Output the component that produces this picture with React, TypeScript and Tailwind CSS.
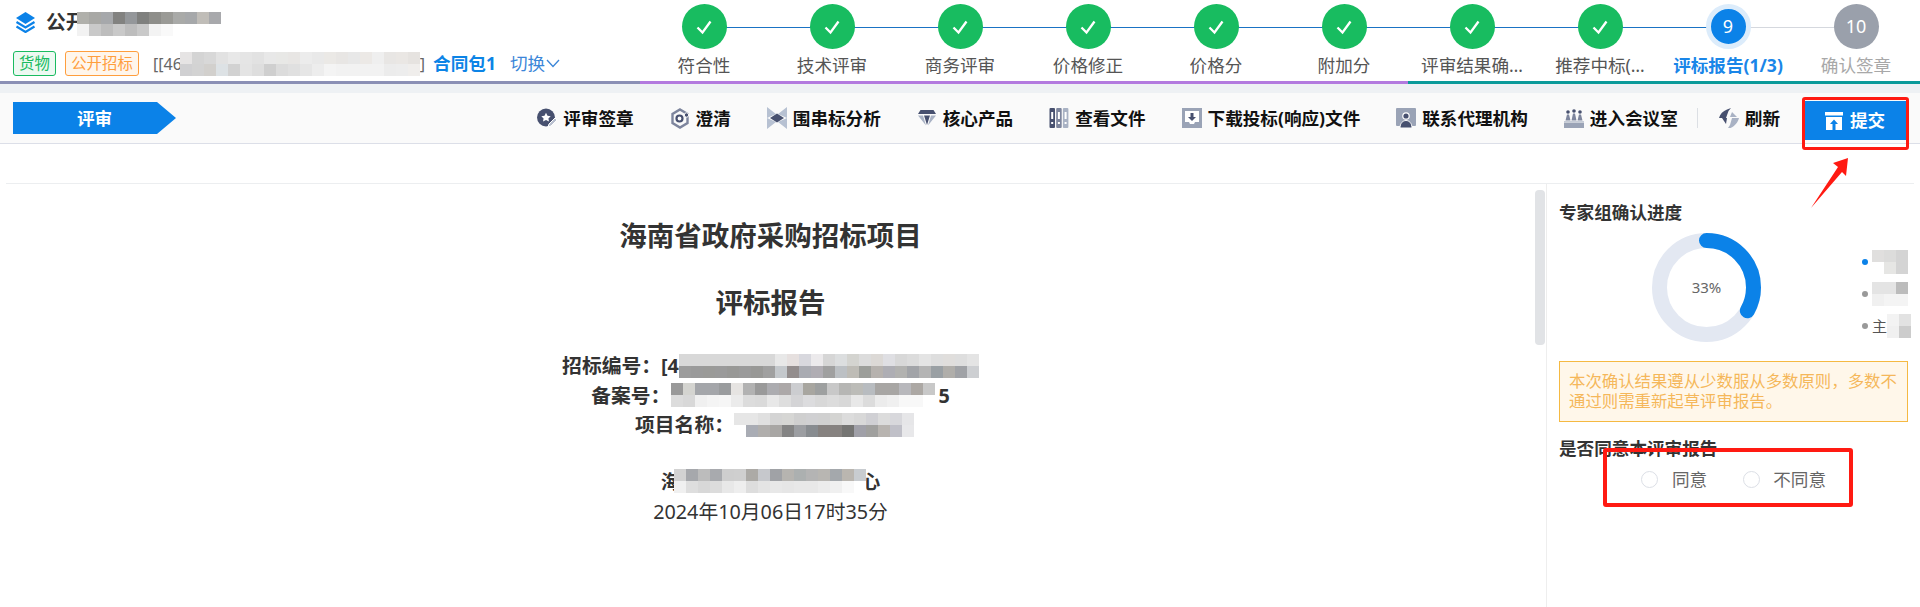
import React from "react";

const B = "#0b82e8";

function Mosaic({ rows, cell = 12, className = "" }: { rows: string[][]; cell?: number; className?: string }) {
  return (
    <span className={"relative inline-flex flex-col align-middle shrink-0 " + className}>
      {rows.map((r, i) => (
        <span key={i} className="flex">
          {r.map((c, j) => (
            <span key={j} className="block" style={{ width: cell, height: cell, backgroundColor: c }} />
          ))}
        </span>
      ))}
    </span>
  );
}

const Logo = () => (
  <svg width="21" height="21" viewBox="0 0 21 21" className="shrink-0">
    <path d="M10.5 0 20 6l-9.5 6L1 6z" fill={B} />
    <path d="M1.5 10 10.5 15.5 19.5 10" fill="none" stroke={B} strokeWidth="2.2" />
    <path d="M1.5 14.5 10.5 20 19.5 14.5" fill="none" stroke={B} strokeWidth="2.2" />
  </svg>
);

const icons: Record<string, React.ReactNode> = {
  sign: (
    <svg width="20" height="20" viewBox="0 0 20 20">
      <circle cx="9" cy="9.5" r="9" fill="#47506f" />
      <path d="m9 4.8 1.5 3 3.2.4-2.3 2.2.6 3.2L9 12.1l-3 1.5.6-3.2-2.3-2.2 3.2-.4z" fill="#fff" />
      <path d="M11 19l1-3 6-6 2 2-6 6z" fill="#b9c0cf" stroke="#fff" strokeWidth="1" />
    </svg>
  ),
  clarify: (
    <svg width="20" height="21" viewBox="0 0 20 21">
      <path d="M10 1.5 17.5 6v9L10 19.5 2.5 15V6z" fill="none" stroke="#7d859d" strokeWidth="2.4" />
      <circle cx="9.5" cy="10.5" r="3" fill="none" stroke="#47506f" strokeWidth="2.2" />
      <circle cx="16.5" cy="7" r="2.2" fill="#47506f" stroke="#fafafa" strokeWidth="1" />
    </svg>
  ),
  bow: (
    <svg width="20" height="22" viewBox="0 0 20 22">
      <path d="M0 0 9 7 0 11zM20 0l-9 7 9 4zM0 22l9-7-9-4zM20 22l-9-7 9-4z" fill="#b7c1d2" />
      <path d="M10 6.5 17 11l-7 4.500L3 11z" fill="#47506f" />
    </svg>
  ),
  gem: (
    <svg width="20" height="18" viewBox="0 0 20 18">
      <path d="M3.500 1h13l2.500 4H1z" fill="#47506f" />
      <path d="M1 6.500h5l3 10zM19 6.500h-5l-3 10z" fill="#a9b2c4" />
      <path d="M7 6.500h6L10 16z" fill="#47506f" />
    </svg>
  ),
  files: (
    <svg width="20" height="20" viewBox="0 0 19 20">
      <rect x="0" y="0" width="5.500" height="20" rx="1" fill="#47506f" />
      <rect x="6.700" y="0" width="5.500" height="20" rx="1" fill="#7d859d" />
      <rect x="13.400" y="0" width="5.500" height="20" rx="1" fill="#a9b2c4" />
      <rect x="1.700" y="4" width="2" height="7" fill="#fff" />
      <rect x="8.400" y="4" width="2" height="7" fill="#fff" />
      <rect x="15.100" y="4" width="2" height="7" fill="#fff" />
      <rect x="1.700" y="14" width="2" height="2" fill="#fff" />
      <rect x="8.400" y="14" width="2" height="2" fill="#fff" />
      <rect x="15.100" y="14" width="2" height="2" fill="#fff" />
    </svg>
  ),
  down: (
    <svg width="20" height="20" viewBox="0 0 20 20">
      <rect width="20" height="20" fill="#9aa3b6" />
      <path d="M3 3h14v11h-4l-1 2H8l-1-2H3z" fill="#fff" />
      <path d="M8.500 5h3v4H14l-4 4-4-4h2.500z" fill="#47506f" />
    </svg>
  ),
  contact: (
    <svg width="20" height="20" viewBox="0 0 20 20">
      <rect width="20" height="18" y="0" rx="1" fill="#9aa3b6" />
      <circle cx="10" cy="8" r="3.800" fill="#fff" />
      <circle cx="10" cy="8" r="2.600" fill="#47506f" />
      <path d="M4 20c0-5 3-7.500 6-7.500s6 2.500 6 7.500z" fill="#47506f" stroke="#fafafa" strokeWidth="1" />
    </svg>
  ),
  meeting: (
    <svg width="20" height="19" viewBox="0 0 20 19">
      <rect x="0" y="13.500" width="20" height="5.500" fill="#9aa3b6" />
      <rect x="0" y="12" width="20" height="1" fill="#c5cbd6" />
      <circle cx="4" cy="3" r="1.800" fill="#47506f" />
      <circle cx="10" cy="2" r="1.800" fill="#47506f" />
      <circle cx="16" cy="3" r="1.800" fill="#47506f" />
      <path d="M1.500 11.500 3 5.500h2l1.500 6zM7.500 11.500 9 4.500h2l1.500 7zM13.500 11.500 15 5.500h2l1.500 6z" fill="#7d859d" />
    </svg>
  ),
  refresh: (
    <svg width="20" height="20" viewBox="0 0 20 20">
      <path d="M12 0 9.500 3 7 10H3.500L0 10c1-4 4-7 8-8.500z" fill="#47506f" />
      <path d="M3 10h5l-1 6z" fill="#47506f" />
      <path d="M9 20l2-3 2-7h3.500l3.500 0c-1 4-4 8-8.500 10z" fill="#a9b2c4" />
      <path d="M11 9l2-5 5 5z" fill="#a9b2c4" />
    </svg>
  ),
};

const tools: [string, string][] = [
  ["sign", "评审签章"],
  ["clarify", "澄清"],
  ["bow", "围串标分析"],
  ["gem", "核心产品"],
  ["files", "查看文件"],
  ["down", "下载投标(响应)文件"],
  ["contact", "联系代理机构"],
  ["meeting", "进入会议室"],
];

const steps = ["符合性", "技术评审", "商务评审", "价格修正", "价格分", "附加分", "评审结果确…", "推荐中标(…"];

const Check = () => (
  <svg width="18" height="18" viewBox="0 0 18 18">
    <path d="M2.500 9.500 7.500 14.500 15.500 3.500" fill="none" stroke="#fff" strokeWidth="2.300" />
  </svg>
);

function Step({ label }: { label: string }) {
  return (
    <div className="relative flex w-[128px] flex-col items-center pt-[4px]">
      <div className="absolute left-1/2 top-[27px] h-px w-[128px] bg-[#1a73c4]" />
      <div className="relative flex h-[45px] w-[45px] items-center justify-center rounded-full bg-[#18bc60]">
        <Check />
      </div>
      <div className="mt-[6px] whitespace-nowrap text-[17.6px] leading-[20px] text-[#555]">{label}</div>
    </div>
  );
}

export default function App() {
  return (
    <div className="relative h-[607px] w-[1920px] overflow-hidden bg-white font-['Noto_Sans','Noto_Sans_CJK_SC',sans-serif] text-[#333]">
      {/* header */}
      <div className="flex h-[81px]">
        <div className="w-[640px] pt-[11px]">
          <div className="flex h-[22px] items-center pl-[15px]">
            <Logo />
            <span className="ml-[10px] text-[19.8px] font-bold leading-[22px]">公开</span>
            <Mosaic
              cell={12}
              rows={[
                ["#b0b0ab", "#a8a8a5", "#a6a8ab", "#828280", "#94979a", "#7f807e", "#8e8e8a", "#9a9a96", "#a9aaa8", "#a6a8aa", "#c0bdb8", "#a8a9ac"],
                ["#f2f2f2", "#c9c9c9", "#bdbdbd", "#c9c9c9", "#bdbdbd", "#c9c9c9", "#f3f3f3", "#f9f9f9", "#fff", "#fff", "#fff", "#fff"],
              ]}
              className="-ml-[9px] mt-[3px]"
            />
          </div>
          <div className="mt-[18px] flex h-[25px] items-center pl-[13px]">
            <span className="flex h-[25px] w-[43px] items-center justify-center rounded-[3px] border border-[#19bb60] bg-[#edf9f2] text-[15.4px] text-[#19bb60]">货物</span>
            <span className="ml-[9px] flex h-[25px] w-[74px] items-center justify-center rounded-[3px] border border-[#ff9e3d] bg-[#fff6ec] text-[15.4px] text-[#ff9e3d]">公开招标</span>
            <span className="ml-[14px] text-[16px] text-[#666]">[[46</span>
            <Mosaic
              rows={[
                ["#e6e4e4", "#d4d4d4", "#d8d8d8", "#e2e2e2", "#e8e8e8", "#e5e5e5", "#e2e2e2", "#e8e8e8", "#e8e8e6", "#e8e6e4", "#ececec", "#e9e9e9", "#ebe9e6", "#e8e6e4", "#e8e8e8", "#ece9e6", "#efefef", "#e8e6e4", "#eae7e4", "#e6e3e0"],
                ["#d0d0d2", "#d3d3d3", "#d2d0cd", "#dde2e5", "#d2d2d2", "#e4e4e4", "#dedede", "#cfcfcf", "#dcdcdc", "#e0e0e0", "#e6e6e6", "#ededed", "#f4f4f4", "#f2f2f2", "#f2f2f2", "#f2f2f2", "#f2f2f2", "#ececec", "#ededed", "#f0eeec"],
              ]}
              cell={12}
              className="-ml-[2px]"
            />
            <span className="text-[16px] text-[#666]">]</span>
            <span className="ml-[8px] text-[17.6px] font-bold text-[#0c84e6]">合同包1</span>
            <span className="ml-[14px] flex items-center text-[17.6px] text-[#3b86d8]">
              切换
              <svg width="14" height="9" viewBox="0 0 14 9" className="ml-[1px]">
                <path d="M1 1l6 6.500L13 1" fill="none" stroke="#3b86d8" strokeWidth="1.300" />
              </svg>
            </span>
          </div>
        </div>
        <div className="flex w-[1280px]">
          {steps.map((s) => (
            <Step key={s} label={s} />
          ))}
          <div className="relative flex w-[128px] flex-col items-center pt-[4px]">
            <div className="absolute left-1/2 top-[27px] h-px w-[128px] bg-[#d5d8de]" />
            <div className="relative flex h-[45px] w-[45px] items-center justify-center rounded-full border-[5px] border-[#dcecfb] bg-[#0b82e8] text-[18px] text-white">9</div>
            <div className="mt-[6px] whitespace-nowrap text-[17.6px] font-bold leading-[20px] text-[#1a86e8]">评标报告(1/3)</div>
          </div>
          <div className="relative flex w-[128px] flex-col items-center pt-[4px]">
            <div className="flex h-[45px] w-[45px] items-center justify-center rounded-full bg-[#9aa0ab] text-[18px] text-white">10</div>
            <div className="mt-[6px] whitespace-nowrap text-[17.6px] leading-[20px] text-[#a8a8a8]">确认签章</div>
          </div>
        </div>
      </div>
      {/* colour strip */}
      <div className="flex h-[3px]">
        <div className="w-[640px] bg-[#8a8fb5]" />
        <div className="w-[768px] bg-[#b37adf]" />
        <div className="flex-1 bg-[#0a9a9a]" />
      </div>
      <div className="h-[9px] bg-[#eef1f4]" />
      {/* toolbar */}
      <div className="flex h-[51px] items-center border-b border-[#dcdfe8] bg-[#fafafa]">
        <div className="ml-[13px] flex h-[32px] w-[163px] items-center justify-center bg-[#0b82e8] text-[17.6px] font-bold text-white [clip-path:polygon(0_0,144px_0,100%_50%,144px_100%,0_100%)]">
          评审
        </div>
        <div className="flex flex-1 items-center justify-end pr-[14px]">
          <div className="flex items-center gap-[36px]">
            {tools.map(([ic, t]) => (
              <div key={t} className="flex items-center gap-[6px] text-[17.6px] font-bold leading-[20px] text-[#111]">
                {icons[ic]}
                <span>{t}</span>
              </div>
            ))}
          </div>
          <div className="ml-[19px] h-[20px] w-px bg-[#dcdfe4]" />
          <div className="ml-[21px] flex items-center gap-[6px] text-[17.6px] font-bold leading-[20px] text-[#111]">
            {icons.refresh}
            <span>刷新</span>
          </div>
          <button className="ml-[24px] mt-[5px] flex h-[39px] w-[102px] items-center justify-center gap-[7px] bg-[#0b82e8] text-[17.6px] font-bold text-white">
            <svg width="18" height="18" viewBox="0 0 18 18">
              <path d="M0 0h18v3.500H0zM1 5h16v13H1z" fill="#fff" />
              <path d="M9 7.500 13 12h-2.500v6h-3v-6H5z" fill="#0b82e8" />
            </svg>
            提交
          </button>
        </div>
      </div>
      {/* spacer line */}
      <div className="mx-[6px] mt-[39px] h-px bg-[#eceef0]" />
      {/* body */}
      <div className="flex h-[423px]">
        <div className="w-[1535px] shrink-0 pl-[6px] pt-[28px] text-center">
          <h1 className="text-[27.5px] font-bold leading-[48px]">海南省政府采购招标项目</h1>
          <h1 className="mt-[19px] text-[27.5px] font-bold leading-[48px]">评标报告</h1>
          <div className="mt-[24px] text-[19.8px] font-bold leading-[29.5px]">
            <div className="flex h-[29.5px] items-center justify-center">
              <span>招标编号：[4</span>
              <Mosaic
                cell={12}
                rows={[
                  ["#d8d8d8", "#d8d8d8", "#d8d8d8", "#d8d8d8", "#d8d8d8", "#d8d8d8", "#d8d8d8", "#d8d8d8", "#e8e8e8", "#e6e0df", "#d8d8de", "#eceaec", "#d6d6d6", "#dcdedf", "#d4d4d0", "#dcdcdc", "#dcd9d6", "#dfdfe3", "#d8d8d8", "#dcdcdc", "#e4e4e4", "#dedede", "#e0dedc", "#dedede", "#e4e4e4"],
                  ["#9c9c9c", "#9a9a9a", "#9a9a98", "#9a9a9a", "#989896", "#9a9a9a", "#989896", "#a0a0a0", "#c4c8cc", "#938d8d", "#a9abb2", "#b0adb3", "#a0a0a0", "#bcc0c4", "#bebcb6", "#9c9e9a", "#b6b2ae", "#aeaeb4", "#b2b2b0", "#a2a4a8", "#b4b4b4", "#9aa0a4", "#b0aeaa", "#a0a2a6", "#cdcfd2"],
                ]}
              />
            </div>
            <div className="flex h-[29.5px] items-center justify-center">
              <span>备案号：</span>
              <Mosaic
                cell={12}
                className="ml-px"
                rows={[
                  ["#999", "#d4d4d0", "#a4a6aa", "#a4a6aa", "#9a9c9e", "#e6e4e2", "#b2b2b2", "#9a9a9a", "#acacb0", "#aca8a8", "#cccdd0", "#a8a6a0", "#9ea0a0", "#c8c8c8", "#b6b6b4", "#bcbcb8", "#b8bcc0", "#a8a6a4", "#a8a6a4", "#b8b8bc", "#aca8a4", "#c8c8c8"],
                  ["#dcdcdc", "#d8d8d8", "#f0f0f0", "#f4f4f4", "#f6f6f6", "#ebebeb", "#dcdcdc", "#dadada", "#e8e8e8", "#dedede", "#d4d4d6", "#dcdcde", "#d8d8d8", "#dcdcdc", "#d8d8d8", "#e8e8e8", "#dcdcdc", "#ececec", "#f0f0f0", "#f8f8f8", "#f8f8f8", "#fff"],
                ]}
              />
              <span className="ml-[3px]">5</span>
            </div>
            <div className="flex h-[29.5px] items-center justify-center pl-[8px]">
              <span>项目名称：</span>
              <Mosaic
                cell={12}
                rows={[
                  ["#e6e6e6", "#e6e6e6", "#e0e0e0", "#d4d4d4", "#d6d6d4", "#cfcfcf", "#d0d0d2", "#d0d0d0", "#d4d4d2", "#dcdcdc", "#d8d8d8", "#d0d0d4", "#dcdcdc", "#d8d8dc", "#e6e6e8"],
                  ["#ffffff", "#a9acb4", "#b0aeac", "#a8a6a4", "#848484", "#9c9ea2", "#888c90", "#868280", "#868280", "#757573", "#a0a0a8", "#a0a09e", "#b8b4b0", "#c0c0c8", "#e8e8ea"],
                ]}
              />
            </div>
          </div>
          <div className="mt-[27px] flex h-[29.5px] items-center justify-center text-[19.8px] font-bold leading-[29.5px]">
            <span>海</span>
            <Mosaic
              cell={12}
              className="-ml-[7px] -mr-[5px]"
              rows={[
                ["#d2d2d2", "#a6a8ac", "#bcbcbc", "#a8aaae", "#cecece", "#cfcfcf", "#acaaa6", "#c6c8cc", "#a0a2a6", "#b6b4b0", "#acb0b0", "#b4b4b4", "#b8b6b2", "#a4a8ac", "#bab6b0", "#c8ccd0"],
                ["#f0f0f0", "#dedede", "#d8d8d8", "#dcdcdc", "#e8e8e8", "#eeeeee", "#dddddd", "#e4e4e4", "#e8e8e8", "#e6e6e6", "#e8e8e8", "#e8e8e8", "#ececec", "#f0f0f0", "#f8f8f8", "#ffffff"],
              ]}
            />
            <span>心</span>
          </div>
          <div className="mt-px h-[29.5px] text-[19.8px] leading-[29.5px]">2024年10月06日17时35分</div>
        </div>
        <div className="relative h-full w-[11px] shrink-0">
          <div className="mt-[6px] h-[155px] w-[10px] rounded-[4px] bg-[#e1e3e6]" />
        </div>
        <div className="h-full w-[374px] shrink-0 border-l border-[#eeeeee] pl-[12px] pr-[12px] pt-[18px]">
          <div className="text-[17.6px] font-bold leading-[20px]">专家组确认进度</div>
          <div className="mt-[10px] flex h-[111px]">
            <svg width="109" height="109" viewBox="0 0 109 109" className="ml-[93px] mt-px shrink-0">
              <circle cx="54.500" cy="54.500" r="47" fill="none" stroke="#e3e8f2" strokeWidth="15" />
              <circle cx="54.500" cy="54.500" r="47" fill="none" stroke="#0b82e8" strokeWidth="15" strokeLinecap="round" strokeDasharray="98 295.300" transform="rotate(-90 54.500 54.500)" />
              <text x="54.500" y="60" textAnchor="middle" fontSize="15" fill="#666">33%</text>
            </svg>
            <div className="ml-[101px] mt-[14px] flex flex-col">
              <div className="flex h-[32px] items-center gap-[4px]">
                <span className="h-[6px] w-[6px] rounded-full bg-[#0b82e8]" />
                <Mosaic cell={12} rows={[["#e0dfde", "#dcdcdb", "#d4d4d4"], ["#ffffff", "#e6e6e4", "#d4d4d4"]]} />
              </div>
              <div className="flex h-[32px] items-center gap-[4px]">
                <span className="h-[6px] w-[6px] rounded-full bg-[#999]" />
                <Mosaic cell={12} rows={[["#e4e4e4", "#e4e4e4", "#bcbcbc"], ["#f0f0f0", "#f4f4f4", "#f4f4f4"]]} />
              </div>
              <div className="flex h-[32px] items-center gap-[4px]">
                <span className="h-[6px] w-[6px] rounded-full bg-[#999]" />
                <span className="text-[15px] leading-[20px] text-[#555]">主</span>
                <Mosaic cell={12} className="-ml-[4px]" rows={[["#f3f3f3", "#e2e2e2"], ["#f0f0f0", "#cccccc"]]} />
              </div>
            </div>
          </div>
          <div className="mt-[18px] h-[61px] border border-[#f5b942] bg-[#fff7ea] py-[9px] pl-[9px] pr-[8px] text-[16.4px] leading-[20px] text-[#f5b75a]">
            本次确认结果遵从少数服从多数原则，多数不通过则需重新起草评审报告。
          </div>
          <div className="mt-[16px] text-[17.6px] font-bold leading-[20px]">是否同意本评审报告</div>
          <div className="mt-[11px] flex h-[20px] items-center text-[17.6px] text-[#666]">
            <span className="ml-[82px] h-[17px] w-[17px] rounded-full border border-[#dcdfe6]" />
            <span className="ml-[14px]">同意</span>
            <span className="ml-[36px] h-[17px] w-[17px] rounded-full border border-[#dcdfe6]" />
            <span className="ml-[13px]">不同意</span>
          </div>
        </div>
      </div>
      {/* annotations */}
      <div className="absolute left-[1802px] top-[97px] h-[53px] w-[107px] rounded-[3px] border-[3px] border-[#ff1a12]" />
      <div className="absolute left-[1603px] top-[448px] h-[59px] w-[250px] rounded-[3px] border-[4px] border-[#ff1a12]" />
      <svg className="absolute left-[1805px] top-[152px]" width="50" height="60" viewBox="0 0 50 60">
        <path d="M43 6 41 24 37 20 6 56 33 15 28 11z" fill="#ff1a12" />
      </svg>
    </div>
  );
}
